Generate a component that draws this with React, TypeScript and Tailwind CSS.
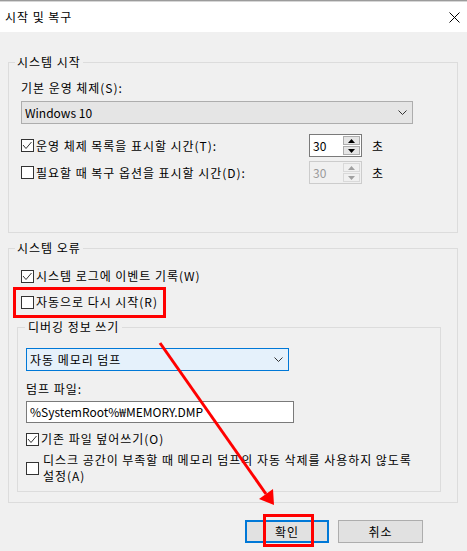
import React from 'react';

function CheckBox({ checked }: { checked?: boolean }) {
  return (
    <span className="flex h-[13px] w-[13px] shrink-0 items-center justify-center border border-[#333333] bg-white">
      {checked && (
        <svg width="11" height="11" viewBox="0 0 11 11">
          <path d="M1 5 L4 8.5 L9.5 2" fill="none" stroke="#333333" strokeWidth="1" />
        </svg>
      )}
    </span>
  );
}

function CheckRow({ checked, children }: { checked?: boolean; children: React.ReactNode }) {
  return (
    <label className="flex h-[16px] items-center gap-[2px] leading-[16px]">
      <CheckBox checked={checked} />
      <span>{children}</span>
    </label>
  );
}

function Chevron() {
  return (
    <svg width="9" height="5" viewBox="0 0 9 5">
      <path d="M0.5 0.5 L4.5 4.5 L8.5 0.5" fill="none" stroke="#333333" strokeWidth="1" />
    </svg>
  );
}

function Arrow({ up, disabled }: { up?: boolean; disabled?: boolean }) {
  return (
    <svg width="7" height="4" viewBox="0 0 7 4">
      <path d={up ? 'M0 4 L3.5 0 L7 4 Z' : 'M0 0 L7 0 L3.5 4 Z'} fill={disabled ? '#a0a0a0' : '#000000'} />
    </svg>
  );
}

function Spinner({ disabled }: { disabled?: boolean }) {
  return (
    <div
      className={`flex h-[23px] w-[53px] border tracking-normal ${
        disabled ? 'border-[#cccccc] bg-[#f0f0f0] text-[#9a9a9a]' : 'border-[#7a7a7a] bg-white text-black'
      }`}
    >
      <span className="flex-1 pl-[3px] leading-[21px]">30</span>
      <div className="flex flex-col gap-[1px] py-[1px] pr-[1px]">
        <span
          className={`flex h-[9px] w-[17px] items-center justify-center border ${
            disabled ? 'border-[#d9d9d9] bg-[#f0f0f0]' : 'border-[#adadad] bg-[#e5e5e5]'
          }`}
        >
          <Arrow up disabled={disabled} />
        </span>
        <span
          className={`flex h-[9px] w-[17px] items-center justify-center border ${
            disabled ? 'border-[#d9d9d9] bg-[#f0f0f0]' : 'border-[#adadad] bg-[#e5e5e5]'
          }`}
        >
          <Arrow disabled={disabled} />
        </span>
      </div>
    </div>
  );
}

export default function App() {
  return (
    <div className="relative h-[551px] w-[467px] overflow-hidden bg-[#f0f0f0] font-['Noto_Sans_CJK_KR',sans-serif] text-[12px] tracking-[0.96px] text-black">
      {/* window frame + title bar */}
      <div className="h-[1px] bg-[#9b9b9b]" />
      <div className="h-[1px] bg-[#d6d6d6]" />
      <div className="flex h-[30px] items-center justify-between bg-white pl-[5px] pr-[7px]">
        <span className="leading-[16px]">시작 및 복구</span>
        <svg width="11" height="11" viewBox="0 0 11 11">
          <path d="M0.5 0.5 L10.5 10.5 M10.5 0.5 L0.5 10.5" stroke="#000000" strokeWidth="1" />
        </svg>
      </div>

      <div className="px-[8px] pt-[22px]">
        {/* 시스템 시작 */}
        <fieldset className="w-[450px] border border-[#dcdcdc]">
          <legend className="ml-[6px] px-[2px] leading-[16px]">시스템 시작</legend>
          <div className="pb-[48px] pl-[12px] pt-[10px]">
            <div className="leading-[16px]">기본 운영 체제(S):</div>
            <div className="mt-[5px] flex h-[23px] w-[392px] items-center justify-between border border-[#adadad] bg-[#e5e5e5] pl-[3px] pr-[5px]">
              <span className="tracking-normal">Windows 10</span>
              <Chevron />
            </div>
            <div className="mt-[10px] flex h-[23px] items-center">
              <div className="w-[288px]">
                <CheckRow checked>운영 체제 목록을 표시할 시간(T):</CheckRow>
              </div>
              <Spinner />
              <span className="ml-[10px] leading-[16px]">초</span>
            </div>
            <div className="mt-[4px] flex h-[23px] items-center">
              <div className="w-[288px]">
                <CheckRow>필요할 때 복구 옵션을 표시할 시간(D):</CheckRow>
              </div>
              <Spinner disabled />
              <span className="ml-[10px] leading-[16px]">초</span>
            </div>
          </div>
        </fieldset>

        {/* 시스템 오류 */}
        <fieldset className="mt-[7px] w-[450px] border border-[#dcdcdc]">
          <legend className="ml-[6px] px-[2px] leading-[16px]">시스템 오류</legend>
          <div className="pb-[10px] pl-[8px] pr-[16px] pt-[12px]">
            <div className="pl-[4px]">
              <CheckRow checked>시스템 로그에 이벤트 기록(W)</CheckRow>
            </div>
            <div className="mt-[10px] pl-[4px]">
              <CheckRow>자동으로 다시 시작(R)</CheckRow>
            </div>

            <fieldset className="mt-[9px] w-[424px] border border-[#dcdcdc]">
              <legend className="ml-[7px] px-[3px] leading-[16px]">디버깅 정보 쓰기</legend>
              <div className="pb-[7px] pl-[8px] pt-[13px]">
                <div className="flex h-[23px] w-[263px] items-center justify-between border border-[#0078d7] bg-[#e5f1fb] pl-[3px] pr-[5px]">
                  <span>자동 메모리 덤프</span>
                  <Chevron />
                </div>
                <div className="mt-[10px] leading-[16px]">덤프 파일:</div>
                <div className="mt-[4px] flex h-[22px] w-[268px] items-center border border-[#7a7a7a] bg-white pl-[3px] tracking-normal">
                  %SystemRoot%₩MEMORY.DMP
                </div>
                <div className="mt-[8px]">
                  <CheckRow checked>기존 파일 덮어쓰기(O)</CheckRow>
                </div>
                <label className="mt-[5px] flex items-center gap-[4px]">
                  <CheckBox />
                  <span className="flex flex-col">
                    <span className="leading-[16px]">디스크 공간이 부족할 때 메모리 덤프의 자동 삭제를 사용하지 않도록</span>
                    <span className="leading-[16px]">설정(A)</span>
                  </span>
                </label>
              </div>
            </fieldset>
          </div>
        </fieldset>
      </div>

      <div className="mt-[17px] flex justify-end gap-[9px] pr-[44px]">
        <button className="h-[23px] w-[84px] border-2 border-[#0078d7] bg-[#e1e1e1] leading-[19px]">확인</button>
        <button className="h-[23px] w-[85px] border border-[#adadad] bg-[#e1e1e1] leading-[21px]">취소</button>
      </div>

      {/* red markup over the dialog */}
      <svg className="pointer-events-none absolute left-0 top-0" width="467" height="551" viewBox="0 0 467 551">
        <rect x="14.5" y="288.5" width="150" height="28" fill="none" stroke="#ff0000" strokeWidth="3" />
        <rect x="264.5" y="515.5" width="48" height="30" fill="none" stroke="#ff0000" strokeWidth="3" />
        <line x1="160" y1="343" x2="266" y2="494" stroke="#ff0000" strokeWidth="3" />
        <polygon points="259,499 273,489 274,505" fill="#ff0000" />
      </svg>
    </div>
  );
}
